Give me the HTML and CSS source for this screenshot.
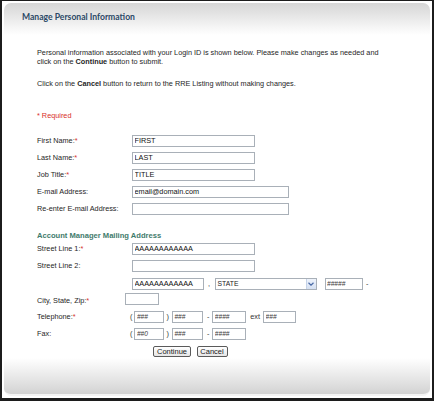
FILE: index.html
```html
<!DOCTYPE html>
<html>
<head>
<meta charset="utf-8">
<title>Manage Personal Information</title>
<link rel="stylesheet" href="styles.css">
</head>
<body>
<div class="frame">
  <div class="head"><span class="title">Manage Personal Information</span></div>
  <div class="main">
    <p class="intro">Personal information associated with your Login ID is shown below. Please make changes as needed and click on the <b>Continue</b> button to submit.</p>
    <p class="intro second">Click on the <b>Cancel</b> button to return to the RRE Listing without making changes.</p>
    <p class="required">* Required</p>

    <div class="form">
      <div class="label">First Name:<span class="star">*</span></div>
      <div class="field"><input class="in w123" value="FIRST"></div>

      <div class="label">Last Name:<span class="star">*</span></div>
      <div class="field"><input class="in w123" value="LAST"></div>

      <div class="label">Job Title:<span class="star">*</span></div>
      <div class="field"><input class="in w123" value="TITLE"></div>

      <div class="label">E-mail Address:</div>
      <div class="field"><input class="in w157" value="email@domain.com"></div>

      <div class="label">Re-enter E-mail Address:</div>
      <div class="field"><input class="in w157" value=""></div>
    </div>

    <div class="section">Account Manager Mailing Address</div>

    <div class="form">
      <div class="label">Street Line 1:<span class="star">*</span></div>
      <div class="field"><input class="in w123" value="AAAAAAAAAAAA"></div>

      <div class="label">Street Line 2:</div>
      <div class="field"><input class="in w123" value=""></div>

      <div class="label city-label">City, State, Zip:<span class="star">*</span></div>
      <div class="field city">
        <div class="line">
          <input class="in w72" value="AAAAAAAAAAAA">
          <span class="sep comma">,</span>
          <div class="select">
            <span class="sel-text">STATE</span>
            <span class="sel-btn"><svg width="6" height="4" viewBox="0 0 6 4"><path d="M0.5 0.8 L3 3.2 L5.5 0.8" fill="none" stroke="#4a6aa6" stroke-width="1.2"/></svg></span>
          </div>
          <input class="in hash w38 zip" value="#####">
          <span class="sep dash2">-</span>
        </div>
        <div class="line">
          <input class="in w34 ext4" value="">
        </div>
      </div>

      <div class="label">Telephone:<span class="star">*</span></div>
      <div class="field phone">
        <span class="sep paren">(</span>
        <input class="in hash w30" value="###">
        <span class="sep paren2">)</span>
        <input class="in hash w31" value="###">
        <span class="sep dash">-</span>
        <input class="in hash w34b" value="####">
        <span class="sep ext">ext</span>
        <input class="in hash w33" value="###">
      </div>

      <div class="label">Fax:</div>
      <div class="field phone">
        <span class="sep paren">(</span>
        <input class="in hash w30" value="##0">
        <span class="sep paren2">)</span>
        <input class="in hash w31" value="###">
        <span class="sep dash">-</span>
        <input class="in hash w34b" value="####">
      </div>
    </div>

    <div class="buttons">
      <button class="btn continue">Continue</button>
      <button class="btn cancel">Cancel</button>
    </div>
  </div>
  <div class="foot"></div>
</div>
</body>
</html>
```
FILE: styles.css
```css
html, body {
  margin: 0;
  padding: 0;
  background: #ffffff;
}

.frame {
  width: 434px;
  height: 401px;
  box-sizing: border-box;
  border-style: solid;
  border-color: #1c1c1c;
  border-width: 1px 2px 3px 2px;
  background: #ffffff;
  display: flex;
  flex-direction: column;
  font-family: "Liberation Sans", Arial, sans-serif;
  font-size: 7.3px;
  color: #262626;
  overflow: hidden;
}

.head {
  margin: 2px 2px 0 2px;
  height: 32px;
  box-sizing: border-box;
  padding: 8px 0 0 18px;
  border-radius: 7px 7px 0 0;
  background: linear-gradient(to bottom, #d6d6d6 0%, #e4e4e4 35%, #f5f5f5 75%, #ffffff 100%);
}

.title {
  font-family: Lato, "Open Sans", sans-serif;
  font-size: 8.6px;
  font-weight: 700;
  line-height: 12px;
  color: #2b4866;
  display: block;
}

.main {
  padding: 0 0 0 35px;
}

.intro {
  margin: 13px 0 0 0;
  width: 356px;
  line-height: 9.2px;
}

.intro.second {
  margin-top: 13px;
}

.intro b {
  font-weight: 700;
}

.required {
  margin: 22px 0 0 0;
  line-height: 9px;
  color: #d8302a;
}

.form {
  display: grid;
  grid-template-columns: 88px 1fr;
  grid-auto-rows: 17px;
  align-items: center;
  margin-top: 12.5px;
}

.form + .section {
  margin-top: 13.5px;
}

.section + .form {
  margin-top: 0.8px;
}

.label {
  line-height: 9px;
  white-space: nowrap;
}

.star {
  color: #d8302a;
}

.field {
  display: flex;
  align-items: center;
  height: 17px;
}

.in {
  box-sizing: border-box;
  height: 12px;
  margin: 0 0 0 7px;
  padding: 0 0 0 1.5px;
  border: 1px solid #a9b0b8;
  border-radius: 0;
  background: #ffffff;
  font-family: "Liberation Sans", Arial, sans-serif;
  font-size: 7.3px;
  color: #111111;
  outline: none;
}

.hash {
  font-style: italic;
  color: #3a3a3a;
  font-size: 6.6px;
}

.w123 { width: 123px; }
.w157 { width: 157px; }
.w72 { width: 72px; }
.w38 { width: 38px; }
.w34 { width: 34px; }
.w30 { width: 30px; margin-left: 2px; }
.w31 { width: 31px; margin-left: 3px; }
.w34b { width: 34px; margin-left: 3px; }
.w33 { width: 33px; margin-left: 3px; }

.section {
  font-weight: 700;
  font-size: 7.6px;
  color: #3f7b6c;
  line-height: 9px;
}

.city-label {
  align-self: end;
  padding-bottom: 3.5px;
}

.form .city {
  grid-row: span 2;
  height: 33px;
  flex-direction: column;
  align-items: flex-start;
  justify-content: flex-start;
  padding-top: 3px;
  box-sizing: border-box;
  gap: 3px;
}

.form .city-label {
  grid-row: span 2;
}

.line {
  display: flex;
  align-items: center;
  height: 12px;
}

.ext4 {
  margin-left: 0;
}

.sep {
  line-height: 9px;
  color: #333333;
}

.comma {
  margin-left: 4px;
}

.select {
  box-sizing: border-box;
  width: 102px;
  height: 12px;
  margin-left: 4.5px;
  border: 1px solid #a9b0b8;
  display: flex;
  align-items: center;
  justify-content: space-between;
  background: #ffffff;
}

.sel-text {
  font-size: 6.8px;
  padding-left: 2px;
  color: #222222;
}

.sel-btn {
  width: 10px;
  height: 10px;
  box-sizing: border-box;
  border-left: 1px solid #c5d3e8;
  background: linear-gradient(to bottom, #eef3fb, #d5e0f2);
  display: flex;
  align-items: center;
  justify-content: center;
}

.zip {
  margin-left: 8px;
}

.dash2 {
  margin-left: 3.5px;
}

.paren {
  margin-left: 5px;
}

.paren2 {
  margin-left: 2px;
}

.dash {
  margin-left: 4px;
}

.ext {
  margin-left: 4px;
}

.form .phone .in:first-of-type {
  margin-left: 2px;
}

.buttons {
  display: flex;
  gap: 5.5px;
  margin: 3.5px 0 0 116px;
}

.btn {
  box-sizing: border-box;
  height: 11.5px;
  padding: 0 2px;
  border: 1px solid #5a5a5a;
  border-radius: 2px;
  background: linear-gradient(to bottom, #ffffff, #e6e6e6);
  font-family: "Liberation Sans", Arial, sans-serif;
  font-size: 7.5px;
  line-height: 9px;
  color: #1a1a1a;
}

.continue { width: 38px; }
.cancel { width: 31px; }

.foot {
  margin: auto 2px 2px 2px;
  height: 36px;
  border-radius: 0 0 7px 7px;
  background: linear-gradient(to bottom, #ffffff 0%, #f2f2f2 30%, #dedede 75%, #d2d2d2 100%);
  border-bottom: 2px solid #f4f4f4;
}
```
